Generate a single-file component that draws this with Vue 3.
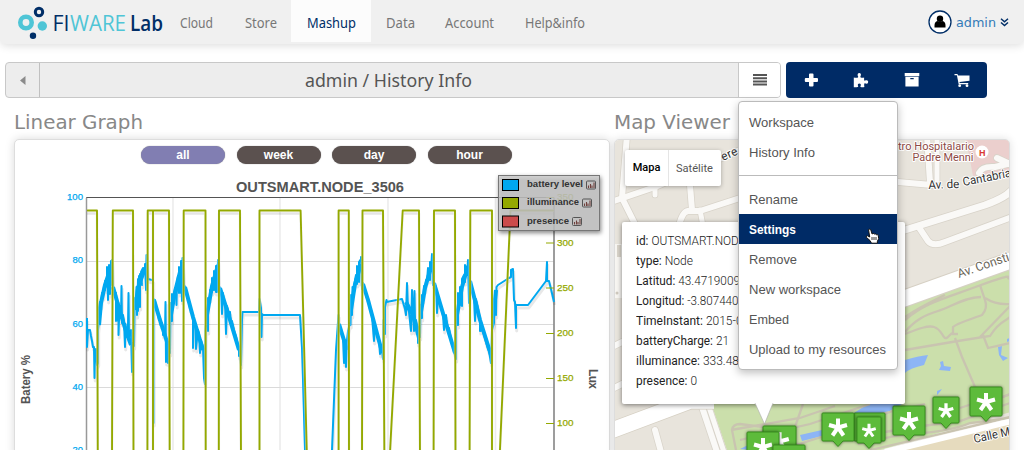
<script setup>
import { h } from 'vue'

// Single line of text set to an exact measure.
const Fit = (p) =>
  h('svg', { width: p.w, height: p.s + 6, class: 'fit' }, [
    h('text', { x: 0, y: p.s + 1, 'font-size': p.s, textLength: p.w, lengthAdjust: 'spacingAndGlyphs' }, p.t),
  ])
Fit.props = ['t', 'w', 's']

const nav = [
  { t: 'Cloud', w: 33, p: 67 },
  { t: 'Store', w: 32, p: 61 },
  { t: 'Mashup', w: 49, p: 80, active: true },
  { t: 'Data', w: 29, p: 59 },
  { t: 'Account', w: 49, p: 79 },
  { t: 'Help&info', w: 60, p: 92 },
]
const menuTop = [['Workspace', 65], ['History Info', 66]]
const menu = [['Rename', 49], ['Settings', 47], ['Remove', 48], ['New workspace', 92], ['Embed', 40], ['Upload to my resources', 137]]
const info = [
  ['id:', 'OUTSMART.NODE_3506', 141],
  ['type:', 'Node', 57],
  ['Latitud:', '43.4719009', 104],
  ['Longitud:', '-3.8074409', 109],
  ['TimeInstant:', '2015-03-10', 130],
  ['batteryCharge:', '21', 93],
  ['illuminance:', '333.48', 103],
  ['presence:', '0', 61],
]
const pills = ['all', 'week', 'day', 'hour']
const left = [[100, 197], [80, 260], [60, 323.5], [40, 386.5], [20, 450]]
const right = [[350, 197], [300, 242.5], [250, 287.5], [200, 333], [150, 378], [100, 423]]
const legend = [['battery level', '#00a8f0', 56, 184.5], ['illuminance', '#94a900', 52, 202.5], ['presence', '#cb4b4b', 42, 221]]
const lux = '87,210.5 97,210.5 97.8,460 112,460 112.8,210.5 133,210.5 133.5,460 147.4,460 147.7,210.5 153,210.5 153,460 153,210.5 169,210.5 169.7,460 183.4,460 183.7,210.5 205.5,210.5 205.7,460 218.8,460 219,210.5 240,210.5 241,460 259.5,460 259.5,210.5 300.6,210.5 307,460 338.6,460 338.6,210.5 348.8,210.5 349,460 362,460 362.5,210.5 383,210.5 384.4,460 389.6,460 402.7,210.5 419,210.5 420,460 433.6,460 434,210.5 455,210.5 455.5,460 469.6,460 470.3,210.5 492,210.5 492,460 499.5,460 510.5,210.5 554,210.5'
const battery = '87,318 87,347 88,330 90,330 91,336 92,341 93,347 94,347 94.5,378 95,350 96,349 97,365 98,363 98,330 99,320 99,308 100,302 101,306 102,293 103,297 104,286 105,290 105,281 107,287 107,267 108,300 109,265 110,294 111,261 111,285 112,260 113,288 114,289 115,296 116,293 116,321 117,300 118,321 118.5,303 118.5,335 119.5,306 121,318 121.5,286 122,323 123,315 124,321 125,347 125.5,324 127,337 128,326 128.5,293 129,337 130,331 131,336 131,330 132,372 133,343 134,346 134.5,310 135,298 136,305 136.5,287 137,315 138,279 138,311 139,276 140,307 140,274 142,285 141,272 143,268 145,270 145,264 146,290 146.5,255 148,279 152,280 153,280 153.5,423 153.5,299 155,300 156,309 158,314 159,320 160,317 160.5,325 162,323 163,330 163,335 165,335 165.5,302 166,362 167,340 168,363 169,342 170,353 170.5,303 172,321 172,294 174,300 175,288 176,288 176.5,305 177,283 178,276 179,293 179,267 181,293 181,261 182,301 182.5,258 184,285 186,289 187,297 189,301 190,309 192,311 193,320 193,348 194,322 196,325 196,349 198,330 199,333 200,353 201,340 203,347 204,378 205,384 205.5,330 207,310 208,331 208,298 210,299 210,290 212,292 212,278 214,290 214,271 216,292 216,266 217,292 218,260 219,286 221,290 222,314 223,293 224,303 225,301 226,334 227,306 229,314 230,312 231,322 232,321 234,330 236,336 238,346 239,350 239,356 240,350 241,365 242,320 242.5,312 259,312 259.5,299 261,308 261.5,337 262,314 263,315 300,315 302,348 303,380 305,450 305,470 331,470 332,450 336,350 338.5,315 338.5,324 340,329 341,333 342,335 343,338 344,363 345,340 346,367 347,340 348,331 350,323 350.5,325 351,295 352,315 352.5,287 354,288 355,280 356,275 357,284 357,266 359,282 359,262 361,259 361,257 362,289 363,283 365,290 367,298 368,298 370,309 372,316 374,341 375,326 377,335 379,340 380,354 381,350 382,350 383,359 383.5,320 385,334 385,307 386.5,300 386.5,302 402,299 405,309 406,315 407,283 408,309 409,312 411,331 412,290 414,331 414.5,291 415,320 416,320 417,325 418,327 418,343 419,337 420,337 420.5,305 422,318 422,295 423,300 424,286 425,290 426,280 427,281 428,268 430,280 430,262 431,271 432,254 433,285 434,283 436,287 437,313 438,297 440,305 441,306 443,315 444,330 446,315 448,331 449,328 451,340 453,345 454,352 455,355 456,359 456,310 458,325 458,293 460,305 460,287 462,306 462,279 464,275 465,282 465,265 467,275 468,260 469,303 470,281 472,289 474,298 475,321 476,299 478,308 480,320 480,331 482,330 484,335 486,342 488,349 489,351 491,363 492,330 494,323 494,304 496,315 496.500,287 498,285 509,278 511,277 511,270 513,269 514,300 515,302 516,328 516,305 528,305 546,281 547,262 547,281 549,281 551,289 554,302'
// Dense stretches, where samples merge into a band.
const dense = [
  '99,325 101,303 105,285 110,270', '113,287 119,308 125,328 131,345', '135,310 138,288 145,268',
  '154,300 160,320 168,345', '171,315 175,292 181,268', '185,287 193,317 203,350',
  '207,315 212,286 218,265', '220,288 227,310 239,350', '339,324 347,350', '351,310 355,284 361,264',
  '363,284 368,300 382,352', '406,302 413,315 419,338', '421,312 425,288 432,264', '434,283 442,310 455,353',
  '457,315 462,287 468,266', '470,281 480,320 491,355', '493,318 496,290',
]
const greenPaths = [
  'M905 332C915 320 925 315 938 311S965 297 981 297',
  'M905 320C925 303 940 300 981 285S1003 280 1010 278',
  'M905 317C920 307 935 300 945 295',
  'M905 350L958 341L990 336C1000 320 1005 322 1010 317',
  'M905 334C918 329 928 325 934 327S941 333 944 337S950 333 953 333V327C957 323 972 319 982 315Q988 308 985 300L980 285',
  'M985 298Q996 305 1010 304M980 337L1010 306M983 335L988 348L1010 343',
  'M955 338L962 357L975 387L1000 398L1010 394',
  'M952 334H958',
  'M736 450L732 430Q733 424 740 424L763 427M731 430L800 418L835 406M795 427L803 404',
  'M740 440L810 424L870 404',
  'M780 450L850 428L905 406M854 420L925 404M854 437Q920 426 960 421L1010 403',
  'M870 450L940 434L1010 417M858 444L900 435Q950 432 970 423L1010 418M960 408L975 403M1000 398L1010 394',
]
const roads = [
  ['M627 135L622 198L636 226', 6], ['M614 201L655 187L740 150', 6], ['M655 186V195', 5],
  ['M690 185L692 210', 6], ['M740 198L700 211H688Q682 212 679 226', 6], ['M700 210L703 226', 5],
  ['M614 346L624 341M614 388L624 383', 6], ['M655 430L661 452', 6],
  ['M702 407L717 452', 6], ['M709 407L724 452', 5],
  ['M898 182L932 185M927 135L930 183', 6], ['M937 135V180', 5],
  ['M905 230L985 205Q1005 198 1012 190', 7], ['M918 226L928 241Q933 247 945 242L1012 217', 6],
  ['M979 173Q982 166 995 167L1012 163M997 158L1012 165', 6],
]
const pins = [
  [763, 426, 33, 30], [747, 432, 32, 29], [773, 445, 32, 29], [854, 413, 31, 28], [822, 413, 32, 28],
  [857, 417, 24, 26], [893, 406, 32, 29], [933, 397, 26, 26], [970, 387, 32, 29],
]
const pinPath = (x, y, w, t) => `M${x + 1} ${y}H${x + w - 1}q1 0 1 1V${y + t - 1}q0 1-1 1H${x + w / 2 + 5}l-5 5.500l-5-5.500H${x + 1}q-1 0-1-1V${y + 1}q0-1 1-1z`
</script>

<template>
  <div class="page">
    <header class="top">
      <svg class="logo" width="150" height="44">
        <circle cx="26" cy="22.500" r="5.700" fill="none" stroke="#4fc5d6" stroke-width="4.600" />
        <circle cx="39" cy="12" r="3.700" fill="none" stroke="#002e67" stroke-width="3" />
        <circle cx="42.300" cy="26" r="4.700" fill="#4fc5d6" />
        <circle cx="33" cy="35.700" r="3.200" fill="#002e67" />
        <text x="52.500" y="31" textLength="17" lengthAdjust="spacingAndGlyphs" fill="#002e67">FI</text>
        <text x="70" y="31" textLength="56" lengthAdjust="spacingAndGlyphs" fill="#4fc5d6">WARE</text>
        <text x="130" y="31" textLength="33" lengthAdjust="spacingAndGlyphs" fill="#002e67" class="lab">Lab</text>
      </svg>
      <nav>
        <a v-for="n in nav" :key="n.t" :class="{ active: n.active }" :style="{ width: n.p + 'px' }"><Fit :t="n.t" :w="n.w" :s="15" /></a>
      </nav>
      <div class="user">
        <svg width="24" height="24"><circle cx="12" cy="12" r="11" fill="#fff" stroke="#002e67" stroke-width="1.300" /><circle cx="12" cy="8.700" r="3.200" /><path d="M6.500 17.500v-2q0-4 3-4.500q2.500 1.600 5 0q3 .5 3 4.500v2z" /></svg>
        <Fit t="admin" :w="40" :s="13" />
        <svg class="chev" width="9" height="9" fill="none" stroke="#002e67" stroke-width="1.500"><path d="M1 .8l3.500 3l3.500-3M1 4.500l3.500 3l3.500-3" /></svg>
      </div>
    </header>

    <div class="bar">
      <div class="path">
        <div class="back"><svg width="6" height="9"><path d="M5.500 0v9L0 4.500z" fill="#8b8b8b" /></svg></div>
        <div class="title"><Fit t="admin / History Info" :w="167" :s="18" /></div>
        <div class="burger"><svg width="14" height="12" fill="#555"><path d="M0 0h14v2H0zM0 3.200h14v2H0zM0 6.400h14v2H0zM0 9.600h14v2H0z" /></svg></div>
      </div>
      <div class="tools">
        <div><svg width="16" height="16" fill="#fff"><path d="M7 1.500h2.500q1 0 1 1V6h3.500q1 0 1 1v2q0 1-1 1h-3.500v3.500q0 1-1 1H7q-1 0-1-1V10H2.800q-1 0-1-1V7q0-1 1-1H6V2.500q0-1 1-1z" /></svg></div>
        <div><svg width="16" height="16" fill="#fff"><path d="M.8 5.500q2.500.6 4.200 0q.6-.5-.3-1.800q-.4-2.700 1.500-2.700q2.200 0 1.600 2.600q-.8 1.200-.2 1.900q2 .6 3.500 0v2.700q.5.900 1.700.1q2.400-.6 2.400 1.500q0 2.400-2.500 1.700q-1-.8-1.500.2q-.1 1.800.2 3.300q-2 .5-3.800 0q-.7-.7.3-1.800q.2-1.700-1.500-1.700q-2 0-1.600 1.700q1 1.300 0 1.800q-2 .4-4 .2z" /></svg></div>
        <div><svg width="16" height="16" fill="#fff"><path d="M.7 1h14.600v3.200H.7z" /><path fill-rule="evenodd" d="M1.400 4.800h13.200v9.700H1.400zM6.300 6v1.200h3.400V6z" /></svg></div>
        <div><svg width="16" height="16" fill="#fff"><path d="M.5 2h3l.4 1.500h11.600v5.300l-10 1.200l.2 1h8.500v1.300H4.700L2.900 3.300H.5z" /><circle cx="5.700" cy="13.700" r="1.400" /><circle cx="13" cy="13.700" r="1.400" /></svg></div>
      </div>
    </div>

    <main>
      <section class="graph">
        <h2><Fit t="Linear Graph" :w="129" :s="20" /></h2>
        <div class="panel">
          <div class="pills"><button v-for="(p, i) in pills" :key="p" :class="{ on: i === 0 }">{{ p }}</button></div>
          <svg class="fill" width="594" height="310" viewBox="15 140 594 310">
            <text x="236" y="192" class="ct" textLength="168" lengthAdjust="spacingAndGlyphs">OUTSMART.NODE_3506</text>
            <path d="M173 198V450M280 198V450M388 198V450M495.500 198V450" stroke="#ececec" stroke-width="1.600" />
            <path d="M87 261.500H554M87 324.500H554M87 387.500H554" stroke="#dadada" />
            <path d="M86.500 450V197.500H554V450" fill="none" stroke="#545454" />
            <path d="M86.500 198V450M554 198V450" stroke="#999" stroke-width="1.500" />
            <g fill="none" stroke-linejoin="round">
              <polyline :points="battery" stroke="#000" stroke-opacity=".09" stroke-width="3" transform="translate(.7 3)" />
              <polyline v-for="d in dense" :key="d" :points="d" stroke="#00a8f0" stroke-width="4" />
              <polyline :points="battery" stroke="#00a8f0" stroke-width="2" />
              <polyline :points="lux" stroke="#000" stroke-opacity=".10" stroke-width="2.500" transform="translate(0 3)" />
              <polyline :points="lux" stroke="#fff" stroke-opacity=".5" stroke-width="3" />
              <polyline :points="lux" stroke="#94a900" stroke-width="1.900" />
            </g>
            <text v-for="[v, y] in left" :key="v" x="83" :y="y + 3" class="tick blue" :textLength="v === 100 ? 16 : 10.500" lengthAdjust="spacingAndGlyphs">{{ v }}</text>
            <g v-for="[v, y] in right" :key="'r' + v">
              <path :d="`M546 ${y + .5}h8`" stroke="#94a900" />
              <text x="557" :y="y + 3" class="tick olive" textLength="16.500" lengthAdjust="spacingAndGlyphs">{{ v }}</text>
            </g>
            <text class="axis" transform="translate(29.500 404) rotate(-90)" textLength="49" lengthAdjust="spacingAndGlyphs">Batery %</text>
            <text class="axis" transform="translate(589 369) rotate(90)" textLength="20">Lux</text>
            <rect class="lshadow" x="498.500" y="175.500" width="101" height="55" fill="#cecece" fill-opacity=".8" stroke="#777" />
            <g v-for="[t, c, w, y] in legend" :key="t">
              <rect x="502.500" :y="y - 5" width="16" height="11" :fill="c" stroke="#000" />
              <text x="527" :y="y + 2.500" class="lg" :textLength="w" lengthAdjust="spacingAndGlyphs">{{ t }}</text>
              <g :transform="`translate(${530 + w} ${y - 4})`"><rect x=".5" y=".5" width="9" height="8" rx="1" fill="none" stroke="#555" /><path d="M2.500 5v2.500M4.500 3.500v4M6 5v2.500M8 2v5.500" stroke="#70403c" stroke-width="1.100" /></g>
            </g>
          </svg>
        </div>
      </section>

      <section class="map">
        <h2><Fit t="Map Viewer" :w="116" :s="20" /></h2>
        <div class="panel">
          <svg class="fill" width="394" height="310" viewBox="615 140 394 310">
            <path d="M614 139h397v311H614z" fill="#e8e4dc" />
            <path d="M966 139h45v36l-38 1z" fill="#ebcfcd" />
            <path d="M614 244h8v54h-8z" fill="#f7f5f1" /><path d="M617 245h4v12h-4z" fill="#d9d4ca" /><circle cx="617" cy="293" r="1.500" fill="#cfc9be" />
            <path d="M711 403H905V304L1011 266V412L880 450H727z" fill="#cbdfab" />
            <path d="M895 450L1010 421V450z" fill="#e6dbbe" />
            <g fill="#8db5f5">
              <path d="M905 360Q918 356 928 355L924 365Q910 368 905 373zM854 413L868 404H902L888 412L875 425H854zM800 435L822 430V436L802 441zM740 449l10-5v6z" />
              <path d="M940 362l3-1l1 5l7 1l-1 4l-11-1l2-4zM937 391l5-2l-3 4l-2 2zM998 347l4-1l-1 9l7 3l-5 3l-4-6zM1007 339l3-1v3l-3 1z" />
            </g>
            <g fill="none"><path v-for="(d, i) in greenPaths" :key="i" :d="d" stroke="#c9c4b0" stroke-width="2.300" /></g>
            <g fill="none" stroke-linecap="round" stroke-linejoin="round">
              <path v-for="([d, w], i) in roads" :key="i" :d="d" stroke="#d8d3c9" :stroke-width="w + 1.500" />
              <path v-for="([d, w], i) in roads" :key="'w' + i" :d="d" stroke="#faf9f7" :stroke-width="w" />
            </g>
            <g fill="none">
              <path d="M610 431L690 401H714" stroke="#d6d0c4" stroke-width="17" /><path d="M610 431L690 401H714" stroke="#fff" stroke-width="15.500" />
              <path d="M900 300L1012 260" stroke="#d6d0c4" stroke-width="18" /><path d="M900 300L1012 260" stroke="#fff" stroke-width="16" />
              <path d="M885 452L1012 421" stroke="#fff" stroke-width="6" />
            </g>
            <g class="lbl">
              <text transform="translate(723 161) rotate(-24)" textLength="17">ere</text>
              <text x="898" y="150" class="hosp" textLength="76" lengthAdjust="spacingAndGlyphs">tro Hospitalario</text>
              <text x="912.500" y="161" class="hosp" textLength="61" lengthAdjust="spacingAndGlyphs">Padre Menni</text>
              <text transform="translate(928.500 189) rotate(-2)" textLength="31" lengthAdjust="spacingAndGlyphs">Av. de</text>
              <text transform="translate(963.500 186) rotate(-11)" textLength="49" lengthAdjust="spacingAndGlyphs">Cantabria</text>
              <text transform="translate(959 278) rotate(-19)" class="road" textLength="54" lengthAdjust="spacingAndGlyphs">Av. Consti</text>
              <text transform="translate(974.500 443) rotate(-12)" textLength="37" lengthAdjust="spacingAndGlyphs">Calle M</text>
            </g>
            <circle cx="982" cy="152" r="6.500" fill="#fff" /><text x="979" y="155.500" class="h">H</text>
            <g v-for="([x, y, w, t], i) in pins" :key="i">
              <path :d="pinPath(x, y, w, t)" class="pin" />
              <path :transform="`translate(${x + w / 2} ${y + t / 2 + .5}) scale(${w / 32})`" d="M0 0V-9M0 0L9-2.500M0 0L5.500 8M0 0L-5.500 8M0 0L-9-2.500" stroke="#fff" stroke-width="4" />
            </g>
          </svg>
          <div class="switch"><b>Mapa</b><span><Fit t="Satélite" :w="37" :s="11" /></span></div>
          <div class="bubble">
            <svg v-for="[k, v, w] in info" :key="k" width="260" height="20"><text y="14" :textLength="w" lengthAdjust="spacingAndGlyphs">{{ k }} <tspan class="val">{{ v }}</tspan></text></svg>
            <svg class="arrow" width="22" height="22"><path d="M1 0L10.500 21L19 0z" fill="#fff" /><path d="M1 0L10.500 21L19 0" fill="none" stroke="#aaa" stroke-width=".6" /></svg>
          </div>
        </div>
      </section>
    </main>

    <div class="menu">
      <div v-for="[t, w] in menuTop" :key="t" class="item"><Fit :t="t" :w="w" :s="13" /></div>
      <hr />
      <div v-for="[t, w] in menu" :key="t" class="item" :class="{ sel: t === 'Settings' }"><Fit :t="t" :w="w" :s="13" /></div>
    </div>
    <svg class="cursor" width="15" height="17"><path d="M3.500 1.500q1.500-1.200 2.300.5l1.300 4l1-.6q1-.2 1.400.8q1.200-.8 1.900.5q1.500-.5 1.900 1l.4 3l-1.300 2.500v2H6.500L5 12.500L1.300 9.300q-.3-1.600 1.200-1.500L4.700 9z" fill="#fff" stroke="#111" /><path d="M7 9v3M9 9v3M11 9v3" stroke="#222" stroke-width=".9" /></svg>
  </div>
</template>

<style>
body { margin: 0; overflow: hidden; background: #fff; }
</style>

<style scoped>
.page { position: relative; width: 1024px; height: 450px; overflow: hidden; background: #fff; font-family: "Liberation Sans", sans-serif; }
.page * { box-sizing: border-box; }
svg { display: block; flex: none; }
.fit { overflow: visible; fill: currentColor; }
.top { height: 44px; background: #f0f0f0; border-radius: 0 0 6px 6px; box-shadow: 0 2px 8px rgba(0, 0, 0, .13); display: flex; }
.logo { overflow: visible; font: 22px "Open Sans", sans-serif; margin-right: 13px; }
.logo .lab { font-weight: 600; }
nav { display: flex; height: 42px; font-family: "Noto Sans", sans-serif; color: #777; }
nav a { display: flex; justify-content: center; padding-top: 12px; }
nav a.active { background: #fcfcfc; color: #002e67; }
.user { margin-left: auto; margin-right: 15px; width: 81px; height: 44px; display: flex; align-items: center; color: #337ab7; font-family: "DejaVu Sans", sans-serif; }
.user .fit { margin: 1px 4px 0 4px; }
.bar { display: flex; gap: 5px; padding: 18px 0 0 5px; height: 54px; }
.path { display: flex; width: 776px; height: 36px; border: 1px solid #c8c8c8; border-radius: 4px; overflow: hidden; background: #ededed; }
.back { width: 34px; border-right: 1px solid #c0c0c0; display: flex; align-items: center; justify-content: center; }
.title { flex: 1; display: flex; justify-content: center; padding: 5px 2px 0 0; color: #555; font-family: "Noto Sans", sans-serif; }
.burger { width: 42px; background: #fff; border-left: 1px solid #c8c8c8; display: flex; align-items: center; justify-content: center; }
.tools { width: 201px; height: 36px; border-radius: 4px; background: #002b66; display: flex; }
.tools div { flex: 1; display: flex; align-items: center; justify-content: center; }
main { display: flex; gap: 4px; padding-left: 14px; }
.graph { width: 596px; }
.map { width: 396px; }
h2 { margin: 0; height: 41px; padding-top: 10px; color: #888; font: 20px "DejaVu Sans", sans-serif; }
.panel { position: relative; height: 320px; border: 1px solid #ddd; border-radius: 5px; overflow: hidden; background: #fff; }
section { position: relative; }
.graph .panel { box-shadow: 0 0 10px rgba(0, 0, 0, .15); }
.map .panel { box-shadow: 0 0 8px rgba(0, 0, 0, .12); }
.fill { position: absolute; left: 0; top: 0; }
.pills { position: relative; z-index: 1; display: flex; gap: 11.500px; padding: 6px 0 0 126px; }
.pills button { width: 84px; height: 18px; padding: 0; border: 0; border-radius: 9px; background: #5b514f; color: #fff; font: bold 12px "Liberation Sans", sans-serif; line-height: 17px; box-shadow: 0 0 1px #777; }
.pills .on { background: #817eb2; }
.ct { font-size: 14.500px; font-weight: bold; fill: #545454; }
.tick { font-size: 9.500px; stroke-width: .25; }
.blue { text-anchor: end; fill: #00a8f0; stroke: #00a8f0; }
.olive { fill: #94a900; stroke: #94a900; }
.axis { font-size: 12px; font-weight: bold; fill: #545454; }
.lg { font-size: 9.500px; font-weight: bold; fill: #333; }
.lshadow { filter: drop-shadow(1px 2px 2px rgba(0, 0, 0, .55)); }
.lbl { font: 12px Roboto, sans-serif; fill: #333; paint-order: stroke; stroke: #fff; stroke-width: 2px; stroke-linejoin: round; }
.lbl .hosp { fill: #8d4a45; font-size: 11px; }
.lbl .road { fill: #6b6658; font-size: 12.500px; }
.h { font: bold 9px "Liberation Sans", sans-serif; fill: #d93a34; }
.pin { fill: #5dbb3b; stroke: #388e1e; filter: drop-shadow(0 0 1.500px rgba(0, 0, 0, .5)); }
.switch { position: absolute; left: 10px; top: 10px; width: 96px; height: 36px; display: flex; background: #fff; border-radius: 2px; box-shadow: 0 1px 4px rgba(0, 0, 0, .3); font: 11px/36px Roboto, sans-serif; color: #555; }
.switch b { width: 44px; text-align: center; color: #000; font-weight: 500; border-right: 1px solid #e5e5e5; }
.switch span { padding: 10px 0 0 7px; }
.bubble { position: absolute; left: 7px; top: 82px; width: 283px; height: 182px; background: #fff; border-radius: 2px; box-shadow: 0 1px 5px rgba(0, 0, 0, .5); padding: 9px 0 0 14px; font: 12px Roboto, sans-serif; fill: #222; }
.val { font-weight: 300; }
.bubble .arrow { position: absolute; left: 132px; top: 181px; }
.menu { position: absolute; left: 738px; top: 101px; width: 160px; height: 269px; border: 1px solid #bbb; border-radius: 4px; background: #fff; box-shadow: 0 3px 8px rgba(0, 0, 0, .25); padding-top: 5px; color: #555; }
.item { height: 30px; padding: 6px 0 0 10px; }
.item.sel { background: #002b66; color: #fff; font-weight: bold; }
hr { border: 0; height: 1px; background: #bbb; margin: 8px 0; }
.cursor { position: absolute; left: 865px; top: 228px; }
</style>
